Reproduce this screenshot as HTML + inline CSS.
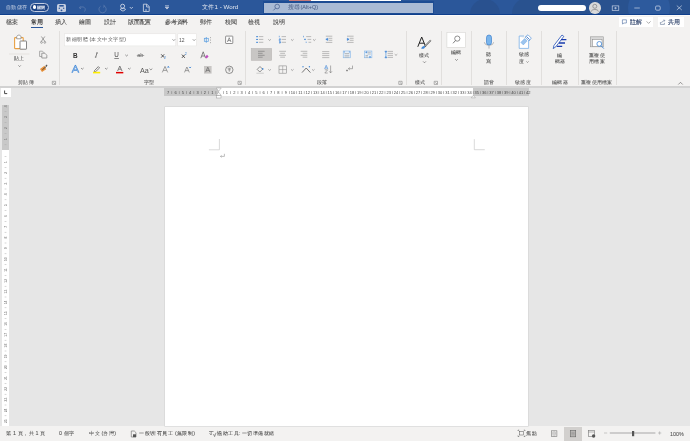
<!DOCTYPE html>
<html><head><meta charset="utf-8">
<style>
*{margin:0;padding:0;box-sizing:border-box}
html,body{width:690px;height:441px;overflow:hidden;background:#e6e6e6;font-family:"Liberation Sans",sans-serif;color:#444}
.a{position:absolute;white-space:nowrap;line-height:1}
.x{position:absolute;white-space:nowrap;line-height:1;transform:scale(.25);transform-origin:0 0}
svg{position:absolute;overflow:visible}
.sep{position:absolute;top:31px;width:1px;height:54px;background:#e1dfdd}
</style></head><body>
<div class="a" style="left:0;top:0;width:690px;height:14px;background:#2b579a"></div>
<div class="a" style="left:0;top:14px;width:690px;height:1px;background:#0f3f8c"></div>
<div class="a" style="left:0;top:15px;width:690px;height:71px;background:#f3f2f1"></div>
<div class="a" style="left:0;top:15px;width:690px;height:1px;background:#fafafa"></div>
<div class="a" style="left:0;top:86px;width:690px;height:1.5px;background:#d2d2d2"></div>
<div class="a" style="left:0;top:426px;width:690px;height:15px;background:#f3f2f1"></div>
<!-- title bar blocks -->
<div class="a" style="left:30.3px;top:2.9px;width:18.6px;height:8.8px;border:1px solid #c3cde2;border-radius:4.4px;background:#1f4586"></div>
<div class="a" style="left:32.5px;top:5.4px;width:3.7px;height:3.7px;background:#fff;border-radius:50%"></div>
<svg width="690" height="14" style="left:0;top:0"><defs><clipPath id="tb"><rect x="0" y="0" width="690" height="14"/></clipPath></defs><g clip-path="url(#tb)">
<circle cx="485" cy="14" r="15" fill="#29518f"/>
<path d="M512 14 C512 2 522 -4 540 -6 H690 V14 Z" fill="#29528f"/>
<circle cx="649" cy="8" r="21" fill="#2d5a9d"/>
</g></svg>
<div class="a" style="left:262.9px;top:1px;width:171.1px;height:13px;background:#1d4c93"></div><div class="a" style="left:264.1px;top:2.5px;width:168.9px;height:10.5px;background:#aabbd5"></div>
<div class="a" style="left:289px;top:0;width:22px;height:1px;background:#c47a7a"></div>
<div class="a" style="left:311px;top:0;width:90px;height:1px;background:#fff"></div>
<div class="a" style="left:538px;top:4.5px;width:48px;height:6.5px;background:#fff;border-radius:3px"></div>
<div class="a" style="left:589px;top:2.3px;width:11.5px;height:11.5px;background:#d9d9d9;border-radius:50%"></div>
<div class="a" style="left:31px;top:27px;width:12px;height:1.3px;background:#2b579a"></div>
<div class="a" style="left:619px;top:17.4px;width:34px;height:10px;background:#fff"></div>
<div class="a" style="left:657.5px;top:17.4px;width:26.5px;height:10px;background:#fff"></div>
<!-- separators -->
<div class="sep" style="left:58.5px"></div>
<div class="sep" style="left:245px"></div>
<div class="sep" style="left:405.5px"></div>
<div class="sep" style="left:441px"></div>
<div class="sep" style="left:471px"></div>
<div class="sep" style="left:506px"></div>
<div class="sep" style="left:541px"></div>
<div class="sep" style="left:577.5px"></div>
<div class="sep" style="left:616px"></div>
<!-- ruler -->
<div class="a" style="left:1px;top:88px;width:9.5px;height:8.7px;background:#fff"></div>
<div class="a" style="left:164px;top:88px;width:365px;height:7.6px;background:#c8c8c8"></div>
<div class="a" style="left:218.5px;top:88px;width:254.8px;height:7.6px;background:#fff"></div>
<div class="a" style="left:1.5px;top:105.2px;width:7.5px;height:321px;background:#fff"></div>
<div class="a" style="left:1.5px;top:105.2px;width:7.5px;height:45px;background:#c8c8c8"></div>
<!-- page -->
<div class="a" style="left:165px;top:106.5px;width:363.2px;height:319.5px;background:#fff;box-shadow:0 0 0 0.6px #d4d4d4"></div>
<div class="a" style="left:564px;top:426.5px;width:17.7px;height:14.5px;background:#d2d0ce"></div>
<div style="position:absolute;left:0;top:0;width:690px;height:441px;will-change:transform"><svg width="690" height="441" style="left:0;top:0" viewBox="0 0 690 441">
<!-- title bar icons -->
<rect x="57" y="4" width="9" height="8" rx="1.5" fill="#c3cde0"/>
<rect x="59.3" y="5" width="4.4" height="1.6" fill="#2b579a"/>
<circle cx="61.5" cy="10.3" r="0.9" fill="#2b579a"/><circle cx="59.3" cy="8.3" r="0.7" fill="#2b579a"/><circle cx="63.7" cy="8.3" r="0.7" fill="#2b579a"/>
<path d="M80.5 6.3 L79.3 7.8 L81 8.8 M79.5 7.8 C83 5.5 87 8 84.5 11.5" stroke="#5878ad" stroke-width="0.9" fill="none"/>
<path d="M103.5 4.8 L104.8 6.5 L103 7.2 M104.5 6.2 A3.6 3.6 0 1 1 100.6 6.2" stroke="#5878ad" stroke-width="0.9" fill="none"/>
<circle cx="122.6" cy="6.2" r="2" stroke="#c3cde0" stroke-width="1" fill="none"/>
<path d="M120.3 9 C121 11.5 124.5 11.5 125.5 9.2 L123.5 8.3 Z" stroke="#c3cde0" stroke-width="1" fill="none"/>
<path d="M129.8 7 L131.3 8.6 L132.8 7" stroke="#c3cde0" stroke-width="0.9" fill="none"/>
<path d="M143.4 4.2 H147 L149.2 6.6 V11.5 H143.4 Z M146.6 4.2 V7 H149.2" stroke="#c3cde0" stroke-width="0.9" fill="none"/>
<path d="M146 9 V11" stroke="#c3cde0" stroke-width="0.9"/>
<path d="M165 5.8 H169 M165.3 7.2 H168.7 L167 9.1 Z" stroke="#c3cde0" stroke-width="0.8" fill="#c3cde0"/>
<!-- search icon -->
<circle cx="277.2" cy="6.5" r="2.3" stroke="#4a6290" stroke-width="0.75" fill="none"/>
<path d="M275.5 8.2 L273.4 10.4" stroke="#4a6290" stroke-width="0.8"/>
<!-- avatar -->
<circle cx="594.8" cy="6.3" r="2" stroke="#888" stroke-width="0.8" fill="none"/>
<path d="M591.2 11.6 C591.5 8.8 598.1 8.8 598.4 11.6" stroke="#888" stroke-width="0.8" fill="none"/>
<!-- window controls -->
<rect x="612.2" y="5.9" width="6.6" height="4.4" stroke="#d5dded" stroke-width="0.65" fill="none"/>
<path d="M614 8.1 H617 M615.5 7 V9.3" stroke="#d5dded" stroke-width="0.6"/>
<path d="M634.3 8 H639.8" stroke="#d5dded" stroke-width="0.65"/>
<rect x="655.6" y="6" width="4.6" height="4.2" rx="1.1" stroke="#d5dded" stroke-width="0.7" fill="none"/>
<path d="M676.8 5.6 L681.8 10 M681.8 5.6 L676.8 10" stroke="#d5dded" stroke-width="0.65"/>
<!-- comment/share icons -->
<path d="M622.4 19.8 H626.4 V23 H623.6 L622.6 24.2 V23 H622.4 Z" stroke="#3b5f99" stroke-width="0.55" fill="none"/>
<path d="M646.6 21.4 L648.6 23.4 L650.6 21.4" stroke="#666" stroke-width="0.55" fill="none"/>
<path d="M660.4 22 V24.4 H664.4 V22.8 M661.6 22.9 C662 21.2 663.4 20.5 664.6 20.6 M663.7 19.7 L664.9 20.6 L663.9 21.7" stroke="#5a6f90" stroke-width="0.6" fill="none"/>
<!-- clipboard group -->
<rect x="14.6" y="37.6" width="8.6" height="11" rx="0.6" fill="#fff" stroke="#e8a043" stroke-width="1.1"/>
<path d="M16.7 38.8 V37 C16.7 34.5 21 34.5 21 37 V38.8 Z" fill="#fff" stroke="#8a8a8a" stroke-width="0.8"/>
<rect x="20" y="41" width="6.5" height="8.2" rx="0.4" fill="#fff" stroke="#777" stroke-width="0.9"/>
<rect x="9" y="53.6" width="20.5" height="0.8" fill="#e1dfdd"/>
<path d="M18.4 65.4 L19.6 66.6 L20.8 65.4" stroke="#666" stroke-width="0.7" fill="none"/>
<!-- cut -->
<path d="M41.4 36.5 L45 41.6 M44.8 36.5 L41.2 41.6" stroke="#888" stroke-width="0.8" fill="none"/>
<circle cx="41.5" cy="42.4" r="0.9" stroke="#888" stroke-width="0.7" fill="none"/>
<circle cx="44.8" cy="42.4" r="0.9" stroke="#888" stroke-width="0.7" fill="none"/>
<!-- copy -->
<path d="M39.6 51.2 H42.5 L44 52.7 V56.5 H39.6 Z" stroke="#999" stroke-width="0.8" fill="#f3f2f1"/>
<path d="M41.8 53.2 H44.8 L46.8 55.2 V58 H41.8 Z" stroke="#888" stroke-width="0.8" fill="#f3f2f1"/>
<!-- format painter -->
<path d="M40 69 L44.5 65.8 L46.2 69.2 L42 72 Z" fill="#e8913a"/>
<path d="M42.3 69.8 L46.8 66" stroke="#444" stroke-width="0.9"/>
<path d="M45.8 66 L47.2 65" stroke="#555" stroke-width="1.2"/>

<!-- font name & size boxes -->
<rect x="64.5" y="33.8" width="111.3" height="12.1" fill="#fff" stroke="#e3e1df" stroke-width="0.5"/>
<path d="M172.5 39.3 L173.8 40.6 L175.1 39.3" stroke="#555" stroke-width="0.6" fill="none"/>
<rect x="177.8" y="33.8" width="18.5" height="12.1" fill="#fff" stroke="#e3e1df" stroke-width="0.5"/>
<path d="M192.8 39.3 L194.1 40.6 L195.4 39.3" stroke="#555" stroke-width="0.6" fill="none"/>
<!-- phonetic guide -->
<rect x="204.3" y="38.3" width="4" height="3" stroke="#5a9ee0" stroke-width="0.7" fill="none"/>
<path d="M206.3 37 V42.8" stroke="#5a9ee0" stroke-width="0.8"/>
<path d="M210.5 37 V38.2 M210.5 39.5 V40.7 M210.5 42 V43.2" stroke="#888" stroke-width="0.6"/>
<!-- enclosed A -->
<rect x="225.6" y="36.1" width="7.2" height="7.4" rx="0.5" stroke="#666" stroke-width="0.7" fill="#fff"/>
<path d="M227.4 42 L229.2 37.7 L231 42 M228 40.6 H230.4" stroke="#555" stroke-width="0.6" fill="none"/>
<!-- B I U ab -->
<text x="73" y="57.6" font-size="6.4" font-weight="bold" fill="#333" font-family="Liberation Sans">B</text>
<path d="M97.9 52.9 H96.2 M96.3 57.2 H94.9 M97 52.9 L95.7 57.2" stroke="#444" stroke-width="0.65" fill="none"/>
<text x="114.3" y="57" font-size="6.3" fill="#444" font-family="Liberation Sans">U</text>
<rect x="114.3" y="58" width="4.6" height="0.6" fill="#444"/>
<path d="M125.3 54.8 L126.6 56 L127.9 54.8" stroke="#555" stroke-width="0.6" fill="none"/>
<text x="137.2" y="57.4" font-size="5.6" fill="#666" font-family="Liberation Sans">ab</text>
<rect x="136.8" y="55.3" width="7.4" height="0.5" fill="#666"/>
<!-- x2 x2 -->
<path d="M161.2 54.3 L164.2 57.6 M164.2 54.3 L161.2 57.6" stroke="#333" stroke-width="0.8"/>
<text x="164.1" y="58.9" font-size="3.6" fill="#3d85d6" font-family="Liberation Sans">2</text>
<path d="M181.9 54.6 L184.9 57.9 M184.9 54.6 L181.9 57.9" stroke="#333" stroke-width="0.8"/>
<text x="184.8" y="54.9" font-size="3.6" fill="#3d85d6" font-family="Liberation Sans">2</text>
<!-- clear formatting -->
<path d="M200.8 58.2 L203.2 51.8 L205.6 58.2 M201.8 56 H204.6" stroke="#555" stroke-width="0.7" fill="none"/>
<path d="M205 57 L207 54.8 L208.6 56.4 L206.6 58.6 Z" fill="#c050c0"/>
<!-- row 3 font -->
<path d="M72 72.8 L75.4 65.6 L78.8 72.8 M73.5 70.1 H77.3" stroke="#3d85d6" stroke-width="1.4" fill="none" stroke-linejoin="round"/>
<path d="M72.3 72.6 L75.4 66.2 L78.5 72.6" stroke="#cfe2f7" stroke-width="0.45" fill="none"/>
<path d="M81 68 L82.3 69.2 L83.6 68" stroke="#555" stroke-width="0.6" fill="none"/>
<path d="M94.5 70.6 L98.3 66.6 L99.6 67.9 L95.8 71.5 L94.2 71.7 Z" stroke="#555" stroke-width="0.7" fill="#f3f2f1"/>
<rect x="93" y="71.8" width="7.2" height="1.6" fill="#ffee00"/>
<path d="M105 68 L106.3 69.2 L107.6 68" stroke="#555" stroke-width="0.6" fill="none"/>
<path d="M117.6 71 L119.8 66 L122 71 M118.5 69.2 H121.1" stroke="#555" stroke-width="0.7" fill="none"/>
<rect x="116" y="71.9" width="7.3" height="1.5" fill="#e00000"/>
<path d="M128 68 L129.3 69.2 L130.6 68" stroke="#555" stroke-width="0.6" fill="none"/>
<text x="140" y="72.6" font-size="7.2" fill="#555" font-family="Liberation Sans">Aa</text>
<path d="M149.5 68.6 L150.9 69.9 L152.3 68.6" stroke="#555" stroke-width="0.6" fill="none"/>
<path d="M162.3 72.4 L165 66.4 L167.7 72.4 M163.3 70.4 H166.7" stroke="#666" stroke-width="0.6" fill="none"/>
<path d="M167.3 67.4 L168.3 66.3 L169.3 67.4" stroke="#3d85d6" stroke-width="0.7" fill="#3d85d6"/>
<path d="M184.5 72.4 L186.9 67 L189.3 72.4 M185.4 70.6 H188.4" stroke="#666" stroke-width="0.6" fill="none"/>
<path d="M189.2 66.9 L190.1 67.9 L191 66.9" stroke="#3d85d6" stroke-width="0.7" fill="#3d85d6"/>
<rect x="204" y="66" width="7.6" height="7.6" fill="#c8c6c4"/>
<path d="M205.6 72.2 L207.8 67.2 L210 72.2 M206.4 70.4 H209.2" stroke="#555" stroke-width="0.6" fill="none"/>
<circle cx="229.3" cy="69.8" r="3.7" stroke="#666" stroke-width="0.7" fill="none"/>
<path d="M227.5 68.2 H231.1 M229.3 68.2 V71.8 M227.8 69.8 H230.8" stroke="#666" stroke-width="0.55" fill="none"/>
<!-- launchers -->
<g stroke="#777" stroke-width="0.55" fill="none">
<path d="M52.3 81.3 H55.6 V84.4 M52.3 81.3 V84.4 H55.6 M53.4 82.4 L55.3 84.2"/>
<path d="M238 81.3 H241.3 V84.4 M238 81.3 V84.4 H241.3 M239.1 82.4 L241 84.2"/>
<path d="M398.8 81.3 H402.1 V84.4 M398.8 81.3 V84.4 H402.1 M399.9 82.4 L401.8 84.2"/>
<path d="M434.2 81.3 H437.5 V84.4 M434.2 81.3 V84.4 H437.5 M435.3 82.4 L437.2 84.2"/>
</g>
</svg>
<svg width="690" height="441" style="left:0;top:0" viewBox="0 0 690 441">
<!-- paragraph row1 -->
<g fill="#3d85d6">
<rect x="256.2" y="36.1" width="1.7" height="1.1"/><rect x="256.2" y="38.9" width="1.7" height="1.1"/><rect x="256.2" y="41.8" width="1.7" height="1.1"/>
</g>
<g stroke="#8c8c8c" stroke-width="0.55">
<path d="M258.9 36.6 H263.3 M258.9 39.4 H263.3 M258.9 42.3 H263.3"/>
<path d="M281.6 36.6 H286 M281.6 39.4 H286 M281.6 42.3 H286"/>
<path d="M306.2 36.6 H311.2 M307.5 39.4 H311.2 M308.5 42.3 H311.2"/>
</g>
<g stroke="#3d85d6" stroke-width="0.6" fill="none">
<path d="M279.3 35.8 V37.3 M279 38.8 H280.5 V39.6 H279 V40.4 H280.5 M279 41.6 H280.5 V43 H279 M279 42.3 H280.5"/>
<path d="M303.5 35.8 V37.3 M305.2 38.7 V40.1 M306.2 41.6 V43"/>
</g>
<circle cx="304.9" cy="39.4" r="0.7" fill="#3d85d6"/>
<g stroke="#707070" stroke-width="0.55" fill="none">
<path d="M268.3 39.3 L269.6 40.5 L270.9 39.3"/>
<path d="M291 39.3 L292.3 40.5 L293.6 39.3"/>
<path d="M313 39.3 L314.3 40.5 L315.6 39.3"/>
</g>
<!-- indents -->
<g stroke="#8c8c8c" stroke-width="0.55">
<path d="M325.8 36.2 H332.3 M328.5 38.3 H332.3 M328.5 40.3 H332.3 M325.8 42.4 H332.3"/>
<path d="M347 36.2 H353.6 M349.7 38.3 H353.6 M349.7 40.3 H353.6 M347 42.4 H353.6"/>
</g>
<path d="M325.8 39.3 L327.6 38.2 V40.4 Z M327 39.3 H328.3" stroke="#3d85d6" stroke-width="0.6" fill="#3d85d6"/>
<path d="M349.1 39.3 L347.3 38.2 V40.4 Z M347.5 39.3 H348.3" stroke="#3d85d6" stroke-width="0.6" fill="#3d85d6"/>
<!-- align row -->
<rect x="251.2" y="48.4" width="20.5" height="12" fill="#c8c6c4" stroke="#b5b3b1" stroke-width="0.5"/>
<g stroke="#6a6a6a" stroke-width="0.55">
<path d="M258 51.3 H264.6 M258 53.3 H262.6 M258 55.3 H264.6 M258 57.2 H262.6"/>
</g>
<g stroke="#8c8c8c" stroke-width="0.55">
<path d="M279.2 51.3 H286 M280.2 53.3 H285 M279.2 55.3 H286 M280.2 57.2 H285"/>
<path d="M300.7 51.3 H307.3 M302.7 53.3 H307.3 M300.7 55.3 H307.3 M302.7 57.2 H307.3"/>
<path d="M322.2 51.6 H329.3 M322.2 53.6 H329.3 M322.2 55.6 H329.3 M322.2 57.6 H329.3"/>
</g>
<rect x="343.2" y="51" width="7.3" height="6.8" stroke="#7fb2e6" stroke-width="0.55" fill="#e6eff8"/>
<g stroke="#888" stroke-width="0.5"><path d="M344.5 53.5 H349.3 M344.5 55.3 H349.3 M344.5 57 H349.3"/></g>
<path d="M344.3 51.3 V52.6 M349.4 51.3 V52.6" stroke="#3d85d6" stroke-width="0.7"/>
<rect x="364.6" y="51" width="7.3" height="6.8" stroke="#7fb2e6" stroke-width="0.55" fill="#e6eff8"/>
<g stroke="#888" stroke-width="0.5"><path d="M367.5 52.3 H370.8 M367.5 54 H370.8 M365.5 55.5 H368 M365.5 57 H368"/></g>
<path d="M365.5 52.3 L366.8 51.6 V53 Z M370.9 57 L369.6 56.3 V57.7 Z" fill="#3d85d6" stroke="#3d85d6" stroke-width="0.4"/>
<g stroke="#8c8c8c" stroke-width="0.55"><path d="M387.6 51.4 H393 M387.6 53.4 H393 M387.6 55.4 H393 M387.6 57.4 H393"/></g>
<path d="M385.9 52.6 L384.9 51.2 H386.9 Z M385.9 56.4 L384.9 57.8 H386.9 Z M385.9 52.4 V56.6" stroke="#3d85d6" stroke-width="0.6" fill="#3d85d6"/>
<path d="M394.7 54.2 L396 55.4 L397.3 54.2" stroke="#707070" stroke-width="0.55" fill="none"/>
<!-- row 3 paragraph -->
<path d="M257.2 69.4 L260 66.5 L262.6 69.2 L259.8 72 Z" stroke="#666" stroke-width="0.7" fill="#f3f2f1"/>
<circle cx="262.7" cy="68.9" r="0.8" fill="#3d85d6"/>
<rect x="256.4" y="72.8" width="7.4" height="0.7" fill="#bbb"/>
<path d="M268.3 69.3 L269.6 70.5 L270.9 69.3" stroke="#707070" stroke-width="0.55" fill="none"/>
<rect x="279" y="65.9" width="7.4" height="7.3" stroke="#8c8c8c" stroke-width="0.6" fill="none"/>
<path d="M282.7 65.9 V73.2 M279 69.55 H286.4" stroke="#888" stroke-width="0.5"/>
<path d="M291 69.3 L292.3 70.5 L293.6 69.3" stroke="#707070" stroke-width="0.55" fill="none"/>
<path d="M302 72.6 L306.2 68 L310.4 72.6" stroke="#555" stroke-width="0.8" fill="none"/>
<circle cx="303" cy="66.7" r="0.7" fill="#3d85d6"/><circle cx="309.4" cy="66.7" r="0.7" fill="#3d85d6"/>
<path d="M312 69.3 L313.3 70.5 L314.6 69.3" stroke="#707070" stroke-width="0.55" fill="none"/>
<path d="M324.6 69 L326.2 65.3 L327.8 69 M325.1 68 H327.3" stroke="#3d85d6" stroke-width="0.6" fill="none"/>
<path d="M324.8 69.8 H327.7 L324.8 73 H327.7" stroke="#707070" stroke-width="0.55" fill="none"/>
<path d="M330.6 65.5 V72.8 M329.2 71.3 L330.6 72.9 L332 71.3" stroke="#707070" stroke-width="0.55" fill="none"/>
<path d="M352.5 65.6 V68.7 H348.5 M349.8 67.5 L348.4 68.7 L349.8 69.9" stroke="#707070" stroke-width="0.55" fill="none"/>
<path d="M346 70.5 H348 M347 69.5 V71.5" stroke="#555" stroke-width="0.5"/>

<!-- styles -->
<path d="M417.8 46.8 L421.7 37 L425.7 46.8 M419.3 43.2 H424" stroke="#222" stroke-width="1" fill="none"/>
<path d="M430.8 40.3 L424.5 46.8" stroke="#555" stroke-width="1.6"/>
<path d="M430.8 40.3 L424.5 46.8" stroke="#f3f2f1" stroke-width="0.6"/>
<path d="M421.2 48.8 C421.8 46.8 423.2 45.8 424.8 46.2 C425.6 47.8 424 49.2 421.2 48.8 Z" fill="#3d85d6"/>
<path d="M423.1 61.4 L424.5 62.8 L425.9 61.4" stroke="#555" stroke-width="0.6" fill="none"/>
<!-- editing -->
<rect x="446.9" y="32.3" width="18.6" height="15" fill="#fff" stroke="#d6d4d2" stroke-width="0.6"/>
<circle cx="457.3" cy="38.6" r="2.6" stroke="#555" stroke-width="0.65" fill="none"/>
<path d="M455.5 40.5 L453 43.3" stroke="#555" stroke-width="0.75"/>
<path d="M455.2 59.2 L456.5 60.5 L457.8 59.2" stroke="#555" stroke-width="0.6" fill="none"/>
<!-- mic -->
<path d="M484.4 42.3 C484.6 46.2 493.4 46.2 493.6 42.3" stroke="#999" stroke-width="0.7" fill="none"/>
<path d="M489 45.8 V48.6" stroke="#999" stroke-width="0.7"/>
<rect x="486.5" y="35" width="5" height="10" rx="2.5" fill="#7ab5ec" stroke="#2e74c8" stroke-width="0.6"/>
<!-- sensitivity -->
<path d="M519.2 36 V48.4 H528.6 V41" stroke="#79aee6" stroke-width="0.8" fill="#fff"/>
<path d="M519.2 36 H524" stroke="#79aee6" stroke-width="0.8"/>
<path d="M520.8 42.4 L524.6 38.6 L527.1 41.1 L523.3 44.9 Z" fill="#9cc4ee" stroke="#5a9ee0" stroke-width="0.4"/>
<path d="M525.1 37 L528 34.8 L531.3 38.1 L529.1 41 Z" fill="#fff" stroke="#3d85d6" stroke-width="0.6"/>
<path d="M526.5 36.5 L529.6 39.6" stroke="#2e6bc0" stroke-width="0.8"/>
<path d="M526.4 61.4 L527.5 62.5 L528.6 61.4" stroke="#555" stroke-width="0.55" fill="none"/>
<!-- editor -->
<path d="M553.2 48.6 L554 45.4 L562 35 L563.8 36.4 L555.8 46.8 Z" stroke="#1f4cb5" stroke-width="0.8" fill="#fff"/>
<path d="M561 39.6 H566.4 M559 43 H565 M556.8 46.3 H562.2" stroke="#1a3cae" stroke-width="1.35"/>
<!-- reuse files -->
<rect x="590.3" y="36.8" width="13" height="10" fill="#d8d8d8" stroke="#999" stroke-width="0.6"/>
<rect x="592.6" y="39.6" width="9.4" height="6.8" fill="#fff" stroke="#888" stroke-width="0.5"/>
<circle cx="599.3" cy="43.9" r="2.4" stroke="#3d85d6" stroke-width="0.8" fill="#fff"/>
<path d="M601 45.7 L603.8 48.6" stroke="#3d85d6" stroke-width="0.9"/>
<!-- collapse ribbon -->
<path d="M678.3 84.5 L680.5 82.3 L682.7 84.5" stroke="#555" stroke-width="0.6" fill="none"/>
</svg>
<svg width="690" height="441" style="left:0;top:0" viewBox="0 0 690 441">

<text x="212.25" y="94.1" font-size="4" fill="#444" text-anchor="middle" font-family="Liberation Sans">1</text>
<text x="204.90" y="94.1" font-size="4" fill="#444" text-anchor="middle" font-family="Liberation Sans">2</text>
<text x="197.55" y="94.1" font-size="4" fill="#444" text-anchor="middle" font-family="Liberation Sans">3</text>
<text x="190.20" y="94.1" font-size="4" fill="#444" text-anchor="middle" font-family="Liberation Sans">4</text>
<text x="182.85" y="94.1" font-size="4" fill="#444" text-anchor="middle" font-family="Liberation Sans">5</text>
<text x="175.50" y="94.1" font-size="4" fill="#444" text-anchor="middle" font-family="Liberation Sans">6</text>
<text x="168.15" y="94.1" font-size="4" fill="#444" text-anchor="middle" font-family="Liberation Sans">7</text>
<rect x="215.67" y="91.1" width="0.5" height="2.9" fill="#777"/>
<rect x="208.32" y="91.1" width="0.5" height="2.9" fill="#777"/>
<rect x="200.97" y="91.1" width="0.5" height="2.9" fill="#777"/>
<rect x="193.62" y="91.1" width="0.5" height="2.9" fill="#777"/>
<rect x="186.28" y="91.1" width="0.5" height="2.9" fill="#777"/>
<rect x="178.93" y="91.1" width="0.5" height="2.9" fill="#777"/>
<rect x="171.57" y="91.1" width="0.5" height="2.9" fill="#777"/>
<text x="226.95" y="94.1" font-size="4" fill="#444" text-anchor="middle" font-family="Liberation Sans">1</text>
<rect x="223.03" y="91.1" width="0.5" height="2.9" fill="#777"/>
<text x="234.30" y="94.1" font-size="4" fill="#444" text-anchor="middle" font-family="Liberation Sans">2</text>
<rect x="230.38" y="91.1" width="0.5" height="2.9" fill="#777"/>
<text x="241.65" y="94.1" font-size="4" fill="#444" text-anchor="middle" font-family="Liberation Sans">3</text>
<rect x="237.72" y="91.1" width="0.5" height="2.9" fill="#777"/>
<text x="249.00" y="94.1" font-size="4" fill="#444" text-anchor="middle" font-family="Liberation Sans">4</text>
<rect x="245.07" y="91.1" width="0.5" height="2.9" fill="#777"/>
<text x="256.35" y="94.1" font-size="4" fill="#444" text-anchor="middle" font-family="Liberation Sans">5</text>
<rect x="252.42" y="91.1" width="0.5" height="2.9" fill="#777"/>
<text x="263.70" y="94.1" font-size="4" fill="#444" text-anchor="middle" font-family="Liberation Sans">6</text>
<rect x="259.77" y="91.1" width="0.5" height="2.9" fill="#777"/>
<text x="271.05" y="94.1" font-size="4" fill="#444" text-anchor="middle" font-family="Liberation Sans">7</text>
<rect x="267.12" y="91.1" width="0.5" height="2.9" fill="#777"/>
<text x="278.40" y="94.1" font-size="4" fill="#444" text-anchor="middle" font-family="Liberation Sans">8</text>
<rect x="274.48" y="91.1" width="0.5" height="2.9" fill="#777"/>
<text x="285.75" y="94.1" font-size="4" fill="#444" text-anchor="middle" font-family="Liberation Sans">9</text>
<rect x="281.82" y="91.1" width="0.5" height="2.9" fill="#777"/>
<text x="293.10" y="94.1" font-size="4" fill="#444" text-anchor="middle" font-family="Liberation Sans">10</text>
<rect x="289.18" y="91.1" width="0.5" height="2.9" fill="#777"/>
<text x="300.45" y="94.1" font-size="4" fill="#444" text-anchor="middle" font-family="Liberation Sans">11</text>
<rect x="296.52" y="91.1" width="0.5" height="2.9" fill="#777"/>
<text x="307.80" y="94.1" font-size="4" fill="#444" text-anchor="middle" font-family="Liberation Sans">12</text>
<rect x="303.88" y="91.1" width="0.5" height="2.9" fill="#777"/>
<text x="315.15" y="94.1" font-size="4" fill="#444" text-anchor="middle" font-family="Liberation Sans">13</text>
<rect x="311.23" y="91.1" width="0.5" height="2.9" fill="#777"/>
<text x="322.50" y="94.1" font-size="4" fill="#444" text-anchor="middle" font-family="Liberation Sans">14</text>
<rect x="318.57" y="91.1" width="0.5" height="2.9" fill="#777"/>
<text x="329.85" y="94.1" font-size="4" fill="#444" text-anchor="middle" font-family="Liberation Sans">15</text>
<rect x="325.92" y="91.1" width="0.5" height="2.9" fill="#777"/>
<text x="337.20" y="94.1" font-size="4" fill="#444" text-anchor="middle" font-family="Liberation Sans">16</text>
<rect x="333.27" y="91.1" width="0.5" height="2.9" fill="#777"/>
<text x="344.55" y="94.1" font-size="4" fill="#444" text-anchor="middle" font-family="Liberation Sans">17</text>
<rect x="340.62" y="91.1" width="0.5" height="2.9" fill="#777"/>
<text x="351.90" y="94.1" font-size="4" fill="#444" text-anchor="middle" font-family="Liberation Sans">18</text>
<rect x="347.98" y="91.1" width="0.5" height="2.9" fill="#777"/>
<text x="359.25" y="94.1" font-size="4" fill="#444" text-anchor="middle" font-family="Liberation Sans">19</text>
<rect x="355.32" y="91.1" width="0.5" height="2.9" fill="#777"/>
<text x="366.60" y="94.1" font-size="4" fill="#444" text-anchor="middle" font-family="Liberation Sans">20</text>
<rect x="362.67" y="91.1" width="0.5" height="2.9" fill="#777"/>
<text x="373.95" y="94.1" font-size="4" fill="#444" text-anchor="middle" font-family="Liberation Sans">21</text>
<rect x="370.02" y="91.1" width="0.5" height="2.9" fill="#777"/>
<text x="381.30" y="94.1" font-size="4" fill="#444" text-anchor="middle" font-family="Liberation Sans">22</text>
<rect x="377.38" y="91.1" width="0.5" height="2.9" fill="#777"/>
<text x="388.65" y="94.1" font-size="4" fill="#444" text-anchor="middle" font-family="Liberation Sans">23</text>
<rect x="384.73" y="91.1" width="0.5" height="2.9" fill="#777"/>
<text x="396.00" y="94.1" font-size="4" fill="#444" text-anchor="middle" font-family="Liberation Sans">24</text>
<rect x="392.07" y="91.1" width="0.5" height="2.9" fill="#777"/>
<text x="403.35" y="94.1" font-size="4" fill="#444" text-anchor="middle" font-family="Liberation Sans">25</text>
<rect x="399.42" y="91.1" width="0.5" height="2.9" fill="#777"/>
<text x="410.70" y="94.1" font-size="4" fill="#444" text-anchor="middle" font-family="Liberation Sans">26</text>
<rect x="406.77" y="91.1" width="0.5" height="2.9" fill="#777"/>
<text x="418.05" y="94.1" font-size="4" fill="#444" text-anchor="middle" font-family="Liberation Sans">27</text>
<rect x="414.12" y="91.1" width="0.5" height="2.9" fill="#777"/>
<text x="425.40" y="94.1" font-size="4" fill="#444" text-anchor="middle" font-family="Liberation Sans">28</text>
<rect x="421.48" y="91.1" width="0.5" height="2.9" fill="#777"/>
<text x="432.75" y="94.1" font-size="4" fill="#444" text-anchor="middle" font-family="Liberation Sans">29</text>
<rect x="428.82" y="91.1" width="0.5" height="2.9" fill="#777"/>
<text x="440.10" y="94.1" font-size="4" fill="#444" text-anchor="middle" font-family="Liberation Sans">30</text>
<rect x="436.17" y="91.1" width="0.5" height="2.9" fill="#777"/>
<text x="447.45" y="94.1" font-size="4" fill="#444" text-anchor="middle" font-family="Liberation Sans">31</text>
<rect x="443.52" y="91.1" width="0.5" height="2.9" fill="#777"/>
<text x="454.80" y="94.1" font-size="4" fill="#444" text-anchor="middle" font-family="Liberation Sans">32</text>
<rect x="450.88" y="91.1" width="0.5" height="2.9" fill="#777"/>
<text x="462.15" y="94.1" font-size="4" fill="#444" text-anchor="middle" font-family="Liberation Sans">33</text>
<rect x="458.23" y="91.1" width="0.5" height="2.9" fill="#777"/>
<text x="469.50" y="94.1" font-size="4" fill="#444" text-anchor="middle" font-family="Liberation Sans">34</text>
<rect x="465.57" y="91.1" width="0.5" height="2.9" fill="#777"/>
<text x="476.85" y="94.1" font-size="4" fill="#444" text-anchor="middle" font-family="Liberation Sans">35</text>
<rect x="472.92" y="91.1" width="0.5" height="2.9" fill="#777"/>
<text x="484.20" y="94.1" font-size="4" fill="#444" text-anchor="middle" font-family="Liberation Sans">36</text>
<rect x="480.27" y="91.1" width="0.5" height="2.9" fill="#777"/>
<text x="491.55" y="94.1" font-size="4" fill="#444" text-anchor="middle" font-family="Liberation Sans">37</text>
<rect x="487.62" y="91.1" width="0.5" height="2.9" fill="#777"/>
<text x="498.90" y="94.1" font-size="4" fill="#444" text-anchor="middle" font-family="Liberation Sans">38</text>
<rect x="494.98" y="91.1" width="0.5" height="2.9" fill="#777"/>
<text x="506.25" y="94.1" font-size="4" fill="#444" text-anchor="middle" font-family="Liberation Sans">39</text>
<rect x="502.32" y="91.1" width="0.5" height="2.9" fill="#777"/>
<text x="513.60" y="94.1" font-size="4" fill="#444" text-anchor="middle" font-family="Liberation Sans">40</text>
<rect x="509.67" y="91.1" width="0.5" height="2.9" fill="#777"/>
<text x="520.95" y="94.1" font-size="4" fill="#444" text-anchor="middle" font-family="Liberation Sans">41</text>
<rect x="517.02" y="91.1" width="0.5" height="2.9" fill="#777"/>
<text x="528.30" y="94.1" font-size="4" fill="#444" text-anchor="middle" font-family="Liberation Sans">42</text>
<rect x="524.38" y="91.1" width="0.5" height="2.9" fill="#777"/>
<path d="M216.2 88 H221.2 L218.7 91.2 Z" fill="#fff" stroke="#999" stroke-width="0.5"/>
<path d="M218.7 92.3 L221.2 95.3 H216.2 Z" fill="#fff" stroke="#999" stroke-width="0.5"/>
<rect x="216.4" y="95.6" width="4.6" height="2.4" fill="#fff" stroke="#999" stroke-width="0.5"/>
<path d="M473.3 95.4 L471.2 97.8 H475.4 Z" fill="#fff" stroke="#999" stroke-width="0.5"/>
<path d="M4.6 90.5 V93.6 H7.2" stroke="#333" stroke-width="0.9" fill="none"/>
<rect x="4.6" y="144.55" width="1.8" height="0.5" fill="#aaa"/>
<text transform="translate(5.5 139.10) rotate(-90)" font-size="3.3" fill="#666" text-anchor="middle" dominant-baseline="central" font-family="Liberation Sans">1</text>
<rect x="4.6" y="133.15" width="1.8" height="0.5" fill="#aaa"/>
<text transform="translate(5.5 128.10) rotate(-90)" font-size="3.3" fill="#666" text-anchor="middle" dominant-baseline="central" font-family="Liberation Sans">2</text>
<rect x="4.6" y="122.45" width="1.8" height="0.5" fill="#aaa"/>
<text transform="translate(5.5 117.20) rotate(-90)" font-size="3.3" fill="#666" text-anchor="middle" dominant-baseline="central" font-family="Liberation Sans">3</text>
<rect x="4.6" y="111.05" width="1.8" height="0.5" fill="#aaa"/>
<text transform="translate(5.5 106.40) rotate(-90)" font-size="3.3" fill="#666" text-anchor="middle" dominant-baseline="central" font-family="Liberation Sans">4</text>
<text transform="translate(5.5 162.00) rotate(-90)" font-size="3.3" fill="#666" text-anchor="middle" dominant-baseline="central" font-family="Liberation Sans">1</text>
<rect x="4.6" y="156.35" width="1.8" height="0.5" fill="#aaa"/>
<text transform="translate(5.5 172.80) rotate(-90)" font-size="3.3" fill="#666" text-anchor="middle" dominant-baseline="central" font-family="Liberation Sans">2</text>
<rect x="4.6" y="167.15" width="1.8" height="0.5" fill="#aaa"/>
<text transform="translate(5.5 183.60) rotate(-90)" font-size="3.3" fill="#666" text-anchor="middle" dominant-baseline="central" font-family="Liberation Sans">3</text>
<rect x="4.6" y="177.95" width="1.8" height="0.5" fill="#aaa"/>
<text transform="translate(5.5 194.40) rotate(-90)" font-size="3.3" fill="#666" text-anchor="middle" dominant-baseline="central" font-family="Liberation Sans">4</text>
<rect x="4.6" y="188.75" width="1.8" height="0.5" fill="#aaa"/>
<text transform="translate(5.5 205.20) rotate(-90)" font-size="3.3" fill="#666" text-anchor="middle" dominant-baseline="central" font-family="Liberation Sans">5</text>
<rect x="4.6" y="199.55" width="1.8" height="0.5" fill="#aaa"/>
<text transform="translate(5.5 216.00) rotate(-90)" font-size="3.3" fill="#666" text-anchor="middle" dominant-baseline="central" font-family="Liberation Sans">6</text>
<rect x="4.6" y="210.35" width="1.8" height="0.5" fill="#aaa"/>
<text transform="translate(5.5 226.80) rotate(-90)" font-size="3.3" fill="#666" text-anchor="middle" dominant-baseline="central" font-family="Liberation Sans">7</text>
<rect x="4.6" y="221.15" width="1.8" height="0.5" fill="#aaa"/>
<text transform="translate(5.5 237.60) rotate(-90)" font-size="3.3" fill="#666" text-anchor="middle" dominant-baseline="central" font-family="Liberation Sans">8</text>
<rect x="4.6" y="231.95" width="1.8" height="0.5" fill="#aaa"/>
<text transform="translate(5.5 248.40) rotate(-90)" font-size="3.3" fill="#666" text-anchor="middle" dominant-baseline="central" font-family="Liberation Sans">9</text>
<rect x="4.6" y="242.75" width="1.8" height="0.5" fill="#aaa"/>
<text transform="translate(5.5 259.20) rotate(-90)" font-size="3.3" fill="#666" text-anchor="middle" dominant-baseline="central" font-family="Liberation Sans">10</text>
<rect x="4.6" y="253.55" width="1.8" height="0.5" fill="#aaa"/>
<text transform="translate(5.5 270.00) rotate(-90)" font-size="3.3" fill="#666" text-anchor="middle" dominant-baseline="central" font-family="Liberation Sans">11</text>
<rect x="4.6" y="264.35" width="1.8" height="0.5" fill="#aaa"/>
<text transform="translate(5.5 280.80) rotate(-90)" font-size="3.3" fill="#666" text-anchor="middle" dominant-baseline="central" font-family="Liberation Sans">12</text>
<rect x="4.6" y="275.15" width="1.8" height="0.5" fill="#aaa"/>
<text transform="translate(5.5 291.60) rotate(-90)" font-size="3.3" fill="#666" text-anchor="middle" dominant-baseline="central" font-family="Liberation Sans">13</text>
<rect x="4.6" y="285.95" width="1.8" height="0.5" fill="#aaa"/>
<text transform="translate(5.5 302.40) rotate(-90)" font-size="3.3" fill="#666" text-anchor="middle" dominant-baseline="central" font-family="Liberation Sans">14</text>
<rect x="4.6" y="296.75" width="1.8" height="0.5" fill="#aaa"/>
<text transform="translate(5.5 313.20) rotate(-90)" font-size="3.3" fill="#666" text-anchor="middle" dominant-baseline="central" font-family="Liberation Sans">15</text>
<rect x="4.6" y="307.55" width="1.8" height="0.5" fill="#aaa"/>
<text transform="translate(5.5 324.00) rotate(-90)" font-size="3.3" fill="#666" text-anchor="middle" dominant-baseline="central" font-family="Liberation Sans">16</text>
<rect x="4.6" y="318.35" width="1.8" height="0.5" fill="#aaa"/>
<text transform="translate(5.5 334.80) rotate(-90)" font-size="3.3" fill="#666" text-anchor="middle" dominant-baseline="central" font-family="Liberation Sans">17</text>
<rect x="4.6" y="329.15" width="1.8" height="0.5" fill="#aaa"/>
<text transform="translate(5.5 345.60) rotate(-90)" font-size="3.3" fill="#666" text-anchor="middle" dominant-baseline="central" font-family="Liberation Sans">18</text>
<rect x="4.6" y="339.95" width="1.8" height="0.5" fill="#aaa"/>
<text transform="translate(5.5 356.40) rotate(-90)" font-size="3.3" fill="#666" text-anchor="middle" dominant-baseline="central" font-family="Liberation Sans">19</text>
<rect x="4.6" y="350.75" width="1.8" height="0.5" fill="#aaa"/>
<text transform="translate(5.5 367.20) rotate(-90)" font-size="3.3" fill="#666" text-anchor="middle" dominant-baseline="central" font-family="Liberation Sans">20</text>
<rect x="4.6" y="361.55" width="1.8" height="0.5" fill="#aaa"/>
<text transform="translate(5.5 378.00) rotate(-90)" font-size="3.3" fill="#666" text-anchor="middle" dominant-baseline="central" font-family="Liberation Sans">21</text>
<rect x="4.6" y="372.35" width="1.8" height="0.5" fill="#aaa"/>
<text transform="translate(5.5 388.80) rotate(-90)" font-size="3.3" fill="#666" text-anchor="middle" dominant-baseline="central" font-family="Liberation Sans">22</text>
<rect x="4.6" y="383.15" width="1.8" height="0.5" fill="#aaa"/>
<text transform="translate(5.5 399.60) rotate(-90)" font-size="3.3" fill="#666" text-anchor="middle" dominant-baseline="central" font-family="Liberation Sans">23</text>
<rect x="4.6" y="393.95" width="1.8" height="0.5" fill="#aaa"/>
<text transform="translate(5.5 410.40) rotate(-90)" font-size="3.3" fill="#666" text-anchor="middle" dominant-baseline="central" font-family="Liberation Sans">24</text>
<rect x="4.6" y="404.75" width="1.8" height="0.5" fill="#aaa"/>
<text transform="translate(5.5 421.20) rotate(-90)" font-size="3.3" fill="#666" text-anchor="middle" dominant-baseline="central" font-family="Liberation Sans">25</text>
<rect x="4.6" y="415.55" width="1.8" height="0.5" fill="#aaa"/>
<path d="M219.4 139 V149.8 H208.9" stroke="#bfbfbf" stroke-width="0.6" fill="none"/>
<path d="M474.3 139.2 V149.7 H484.8" stroke="#bfbfbf" stroke-width="0.6" fill="none"/>
<path d="M224.4 153.8 V156.4 H220.6 M221.6 155.4 L220.5 156.4 L221.6 157.4" stroke="#888" stroke-width="0.55" fill="none"/>
<path d="M131.3 431 H134.3 L136 432.7 V437 H131.3 Z" stroke="#666" stroke-width="0.6" fill="none"/>
<rect x="133" y="434.3" width="3" height="2.8" fill="#555"/>
<path d="M209 431.5 H213.5 M211.2 431.5 V435 M209.5 433.3 L211.2 435 M213.5 434 L214.6 436.6 L216 432.8" stroke="#555" stroke-width="0.6" fill="none"/>
<path d="M518 431 V430.2 H519.2 M523.8 430.2 H525 V431 M525 435.5 V436.5 H523.8 M519.2 436.5 H518 V435.5" stroke="#555" stroke-width="0.6" fill="none"/>
<rect x="519.6" y="431.6" width="3.8" height="3.4" stroke="#555" stroke-width="0.5" fill="none"/>
<rect x="551.3" y="430.8" width="5.6" height="5.6" stroke="#777" stroke-width="0.6" fill="none"/>
<path d="M554.1 430.8 V436.4 M552.2 432.3 H553.5 M552.2 433.6 H553.5 M552.2 434.9 H553.5 M554.8 432.3 H556.1 M554.8 433.6 H556.1 M554.8 434.9 H556.1" stroke="#777" stroke-width="0.4"/>
<rect x="570.3" y="430.6" width="5.4" height="6.2" stroke="#666" stroke-width="0.6" fill="#bcbab8"/>
<path d="M571.3 432.3 H574.7 M571.3 433.6 H574.7 M571.3 434.9 H574.7" stroke="#777" stroke-width="0.4"/>
<rect x="588.3" y="430.6" width="6" height="5.8" stroke="#777" stroke-width="0.6" fill="none"/>
<path d="M588.3 432 H594.3" stroke="#777" stroke-width="0.5"/>
<circle cx="593.6" cy="436" r="1.7" fill="#555"/>
<path d="M604 433 H607.2" stroke="#999" stroke-width="0.5"/>
<path d="M609.8 433 H655.4" stroke="#888" stroke-width="0.7"/>
<rect x="632" y="431" width="2.2" height="5.2" fill="#555"/>
<path d="M658 433 H661.3 M659.65 431.35 V434.65" stroke="#999" stroke-width="0.5"/>
</svg>
<div class="x" style="left:6.3px;top:3.85px;font-size:21.2px;color:#cfd7e7">自動儲存</div>
<div class="x" style="left:202.0px;top:4.2px;font-size:24.8px;color:#e4e8f0">文件1 - Word</div>
<div class="x" style="left:288.15px;top:4.25px;font-size:22.0px;color:#42577f">搜尋 (Alt+Q)</div>
<div class="x" style="left:6.15px;top:19.35px;font-size:23.2px;color:#484848;-webkit-text-stroke:0.3px #484848">檔案</div>
<div class="x" style="left:30.95px;top:19.35px;font-size:23.2px;color:#2a2a2a;-webkit-text-stroke:0.5px #2a2a2a">常用</div>
<div class="x" style="left:55.0px;top:19.35px;font-size:23.2px;color:#484848;-webkit-text-stroke:0.3px #484848">插入</div>
<div class="x" style="left:79.15px;top:19.35px;font-size:23.2px;color:#484848;-webkit-text-stroke:0.3px #484848">繪圖</div>
<div class="x" style="left:103.5px;top:19.35px;font-size:23.2px;color:#484848;-webkit-text-stroke:0.3px #484848">設計</div>
<div class="x" style="left:128.2px;top:19.4px;font-size:23.2px;color:#484848;-webkit-text-stroke:0.3px #484848">版面配置</div>
<div class="x" style="left:164.7px;top:19.4px;font-size:23.2px;color:#484848;-webkit-text-stroke:0.3px #484848">參考資料</div>
<div class="x" style="left:200.25px;top:19.15px;font-size:23.2px;color:#484848;-webkit-text-stroke:0.3px #484848">郵件</div>
<div class="x" style="left:224.5px;top:19.15px;font-size:23.2px;color:#484848;-webkit-text-stroke:0.3px #484848">校閱</div>
<div class="x" style="left:248.4px;top:19.15px;font-size:23.2px;color:#484848;-webkit-text-stroke:0.3px #484848">檢視</div>
<div class="x" style="left:273.1px;top:19.15px;font-size:23.2px;color:#484848;-webkit-text-stroke:0.3px #484848">說明</div>
<div class="x" style="left:629.5px;top:19.2px;font-size:23.2px;color:#1f3560;-webkit-text-stroke:0.45px #1f3560">註解</div>
<div class="x" style="left:668.0px;top:19.2px;font-size:23.2px;color:#1f3560;-webkit-text-stroke:0.45px #1f3560">共用</div>
<div class="x" style="left:66.1px;top:36.45px;font-size:21.6px;color:#555">新細明體 (本文中文字型)</div>
<div class="x" style="left:178.5px;top:37.8px;font-size:20.0px;color:#555">12</div>
<div class="x" style="left:14.3px;top:56.25px;font-size:20.8px;color:#484848;-webkit-text-stroke:0.15px #484848">貼上</div>
<div class="x" style="left:418.95px;top:52.55px;font-size:20.8px;color:#484848;-webkit-text-stroke:0.15px #484848">樣式</div>
<div class="x" style="left:451.35px;top:50.4px;font-size:20.8px;color:#484848;-webkit-text-stroke:0.15px #484848">編輯</div>
<div class="x" style="left:486.45px;top:52.1px;font-size:20.8px;color:#484848;-webkit-text-stroke:0.15px #484848">聽</div>
<div class="x" style="left:486.45px;top:59.45px;font-size:20.8px;color:#484848;-webkit-text-stroke:0.15px #484848">寫</div>
<div class="x" style="left:519.3px;top:52.1px;font-size:20.8px;color:#484848;-webkit-text-stroke:0.15px #484848">敏感</div>
<div class="x" style="left:518.65px;top:59.45px;font-size:20.8px;color:#484848;-webkit-text-stroke:0.15px #484848">度</div>
<div class="x" style="left:557.15px;top:52.6px;font-size:20.8px;color:#484848;-webkit-text-stroke:0.15px #484848">編</div>
<div class="x" style="left:554.65px;top:59.45px;font-size:20.8px;color:#484848;-webkit-text-stroke:0.15px #484848">輯器</div>
<div class="x" style="left:589.15px;top:52.6px;font-size:20.8px;color:#484848;-webkit-text-stroke:0.15px #484848">重複使</div>
<div class="x" style="left:589.15px;top:59.45px;font-size:20.8px;color:#484848;-webkit-text-stroke:0.15px #484848">用檔案</div>
<div class="x" style="left:17.7px;top:79.8px;font-size:20.8px;color:#505050;-webkit-text-stroke:0.15px #505050">剪貼簿</div>
<div class="x" style="left:143.75px;top:79.8px;font-size:20.8px;color:#505050;-webkit-text-stroke:0.15px #505050">字型</div>
<div class="x" style="left:316.75px;top:79.8px;font-size:20.8px;color:#505050;-webkit-text-stroke:0.15px #505050">段落</div>
<div class="x" style="left:414.6px;top:79.8px;font-size:20.8px;color:#505050;-webkit-text-stroke:0.15px #505050">樣式</div>
<div class="x" style="left:483.5px;top:79.8px;font-size:20.8px;color:#505050;-webkit-text-stroke:0.15px #505050">語音</div>
<div class="x" style="left:515.45px;top:79.8px;font-size:20.8px;color:#505050;-webkit-text-stroke:0.15px #505050">敏感度</div>
<div class="x" style="left:551.6px;top:79.8px;font-size:20.8px;color:#505050;-webkit-text-stroke:0.15px #505050">編輯器</div>
<div class="x" style="left:581.1px;top:79.8px;font-size:20.8px;color:#505050;-webkit-text-stroke:0.15px #505050">重複使用檔案</div>
<div class="x" style="left:6.1px;top:430.4px;font-size:21.6px;color:#484848;-webkit-text-stroke:0.15px #484848">第 1 頁，共 1 頁</div>
<div class="x" style="left:59.4px;top:430.4px;font-size:21.6px;color:#484848;-webkit-text-stroke:0.15px #484848">0 個字</div>
<div class="x" style="left:88.7px;top:430.4px;font-size:21.6px;color:#484848;-webkit-text-stroke:0.15px #484848">中文 (台灣)</div>
<div class="x" style="left:138.5px;top:430.4px;font-size:21.6px;color:#484848;-webkit-text-stroke:0.15px #484848">一般&#92;所有員工 (無限制)</div>
<div class="x" style="left:217.15px;top:430.4px;font-size:21.6px;color:#484848;-webkit-text-stroke:0.15px #484848">協助工具: 一切準備就緒</div>
<div class="x" style="left:526.0px;top:430.4px;font-size:21.6px;color:#484848;-webkit-text-stroke:0.15px #484848">焦點</div>
<div class="x" style="left:669.6px;top:430.9px;font-size:21.6px;color:#484848;-webkit-text-stroke:0.15px #484848">100%</div>
<div class="x" style="left:37px;top:4.7px;font-size:17px;font-weight:bold;color:#e8ecf4">關閉</div>
</div>
</body></html>
